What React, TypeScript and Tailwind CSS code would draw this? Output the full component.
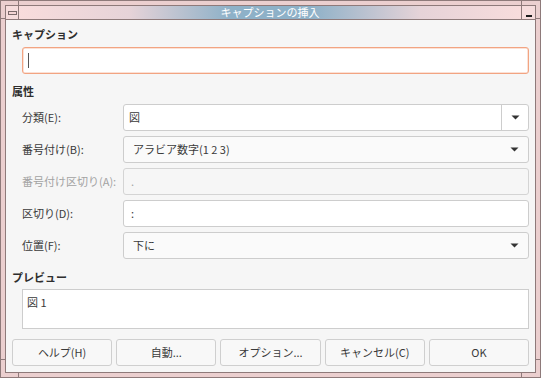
import React from 'react';

const Caret = () => (
  <svg width="9" height="5" viewBox="0 0 9 5" className="shrink-0">
    <path d="M0.5 0.5 H8.5 L4.5 4.5 Z" fill="#333" />
  </svg>
);

type RowProps = {
  label: string;
  children: React.ReactNode;
  disabled?: boolean;
};

const Row = ({ label, children, disabled }: RowProps) => (
  <div className="flex h-[27px] items-center">
    <div className={`w-[111px] pl-[10px] shrink-0 whitespace-nowrap ${disabled ? 'text-[#a3a3a3]' : 'text-[#3a3a3a]'}`}>
      {label}
    </div>
    <div className="flex-1 h-full">{children}</div>
  </div>
);

export default function App() {
  const buttons = ['ヘルプ(H)', '自動...', 'オプション...', 'キャンセル(C)', 'OK'];

  return (
    <div className="relative w-[541px] h-[378px] bg-[#ebcfcf] border border-[#8e7a7a] p-[4px] font-['Noto_Sans_CJK_JP','Noto_Sans',sans-serif] text-[11px] overflow-hidden">
      {/* frame handle ticks */}
      <div className="absolute left-[17px] top-0 w-px h-[5px] bg-[#8e7a7a]" />
      <div className="absolute left-[520px] top-0 w-px h-[5px] bg-[#8e7a7a]" />
      <div className="absolute left-[17px] bottom-0 w-px h-[5px] bg-[#8e7a7a]" />
      <div className="absolute left-[520px] bottom-0 w-px h-[5px] bg-[#8e7a7a]" />
      <div className="absolute left-0 top-[17px] w-[5px] h-px bg-[#8e7a7a]" />
      <div className="absolute left-0 top-[358px] w-[5px] h-px bg-[#8e7a7a]" />
      <div className="absolute right-0 top-[17px] w-[5px] h-px bg-[#8e7a7a]" />
      <div className="absolute right-0 top-[358px] w-[5px] h-px bg-[#8e7a7a]" />

      <div className="flex flex-col h-full border border-[#8e7a7a]">
        {/* title bar */}
        <div className="flex h-[14px] border-b border-[#8e7a7a] shrink-0">
          <div className="w-[13px] bg-[#f6dcdc] border-r border-[#8e7a7a] flex items-center justify-center">
            <div className="w-[9px] h-[4px] border border-[#7a6a6a] bg-[#f3d4d4]" />
          </div>
          <div className="flex-1 flex items-center justify-center bg-[linear-gradient(90deg,#f8dcdc_0%,#e6d3d8_22%,#8eb1c8_42%,#8eb1c8_58%,#e6d3d8_80%,#f8dcdc_100%)] text-white text-[11px] leading-none">
            キャプションの挿入
          </div>
          <div className="w-[14px] bg-[#f6dcdc] border-l border-[#8e7a7a] flex items-end justify-center pb-[2px]">
            <div className="w-[6px] h-[2px] bg-[#1a1a1a]" />
          </div>
        </div>

        {/* content */}
        <div className="flex-1 bg-[#f6f6f6] px-[6px] pt-[6px] flex flex-col text-[#3a3a3a]">
          <div className="h-[16px] leading-[16px] font-bold text-[#2e2e2e]">キャプション</div>
          <div className="mt-[5px] ml-[10px] h-[27px] bg-white border border-[#f2a482] rounded-[3px] flex items-center pl-[5px] shadow-[inset_0_0_0_0.5px_#f7c4ae]">
            <div className="w-px h-[15px] bg-[#555]" />
          </div>

          <div className="mt-[9px] h-[16px] leading-[16px] font-bold text-[#2e2e2e]">属性</div>
          <div className="mt-[5px] flex flex-col gap-[5px]">
            <Row label="分類(E):">
              <div className="h-full flex bg-white border border-[#cdcdcd] rounded-[3px]">
                <div className="flex-1 flex items-center pl-[5px]">図</div>
                <div className="w-[27px] border-l border-[#cdcdcd] flex items-center justify-center">
                  <Caret />
                </div>
              </div>
            </Row>
            <Row label="番号付け(B):">
              <div className="h-full flex items-center justify-between bg-[#fafafa] border border-[#cdcdcd] rounded-[3px] pl-[9px] pr-[9px]">
                <span>アラビア数字(1 2 3)</span>
                <Caret />
              </div>
            </Row>
            <Row label="番号付け区切り(A):" disabled>
              <div className="h-full flex items-center bg-[#f6f6f6] border border-[#d4d4d4] rounded-[3px] pl-[7px] text-[#a3a3a3]">
                .
              </div>
            </Row>
            <Row label="区切り(D):">
              <div className="h-full flex items-center bg-white border border-[#cdcdcd] rounded-[3px] pl-[7px]">
                :
              </div>
            </Row>
            <Row label="位置(F):">
              <div className="h-full flex items-center justify-between bg-[#fafafa] border border-[#cdcdcd] rounded-[3px] pl-[9px] pr-[9px]">
                <span>下に</span>
                <Caret />
              </div>
            </Row>
          </div>

          <div className="mt-[10px] h-[16px] leading-[16px] font-bold text-[#2e2e2e]">プレビュー</div>
          <div className="mt-[4px] ml-[10px] h-[40px] bg-white border border-[#cdcdcd] pl-[4px] pt-[3px] leading-[18px]">
            図 1
          </div>

          <div className="mt-[10px] flex gap-[4px]">
            {buttons.map((b) => (
              <div
                key={b}
                className="flex-1 h-[27px] flex items-center justify-center bg-[#f8f8f8] border border-[#cfcfcf] rounded-[3px] text-[#3a3a3a]"
              >
                {b}
              </div>
            ))}
          </div>
        </div>
      </div>
    </div>
  );
}
